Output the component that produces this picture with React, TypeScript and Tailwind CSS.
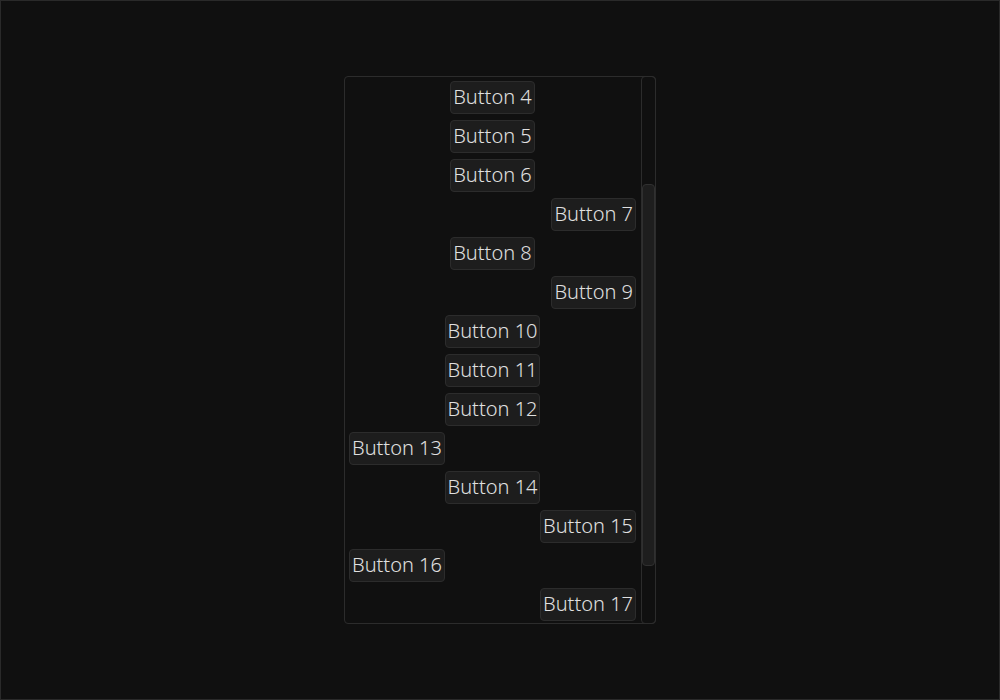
import React from "react";

type Align = "start" | "center" | "end";

const items: [number, Align][] = [
  [4, "center"],
  [5, "center"],
  [6, "center"],
  [7, "end"],
  [8, "center"],
  [9, "end"],
  [10, "center"],
  [11, "center"],
  [12, "center"],
  [13, "start"],
  [14, "center"],
  [15, "end"],
  [16, "start"],
  [17, "end"],
];

const alignClass: Record<Align, string> = {
  start: "justify-start",
  center: "justify-center",
  end: "justify-end",
};

export default function App() {
  return (
    <div
      className="w-[1000px] h-[700px] border border-[#2a2a2a] bg-[#101010] flex items-center justify-center"
      style={{ fontFamily: '"Noto Sans", "Open Sans", sans-serif' }}
    >
      <div className="w-[312px] h-[548px] border border-[#2c2c2c] rounded-[4px] flex">
        <div className="flex-1 min-w-0 pl-[4px] pr-[5px] pt-[4px] flex flex-col gap-[6px] overflow-hidden">
          {items.map(([n, a]) => (
            <div key={n} className={`flex ${alignClass[a]}`}>
              <div className="h-[33px] px-[2px] border border-[#2c2c2c] rounded-[4px] bg-[#1d1d1d] text-[#e0e0e0] text-[20px] font-light leading-[30px] whitespace-nowrap">
                Button {n}
              </div>
            </div>
          ))}
        </div>
        <div className="w-[15px] -mr-px -my-px border border-[#2c2c2c] rounded-[4px] pt-[107px] shrink-0">
          <div className="h-[382px] bg-[#1e1e1e] border border-[#303030] rounded-[4px]" />
        </div>
      </div>
    </div>
  );
}
